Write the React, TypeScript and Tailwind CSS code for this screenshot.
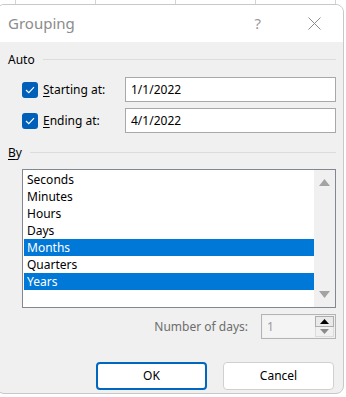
import { useState } from 'react';

const UNITS = ['Seconds', 'Minutes', 'Hours', 'Days', 'Months', 'Quarters', 'Years'];
const GRID_X = [15, 95, 175, 255, 335];

export default function App() {
  const [selected, setSelected] = useState<string[]>(['Months', 'Years']);

  const toggle = (u: string) =>
    setSelected((s) => (s.includes(u) ? s.filter((x) => x !== u) : [...s, u]));

  return (
    <div
      className="relative w-[346px] h-[397px] bg-white overflow-hidden text-[12px] text-black"
      style={{ fontFamily: '"Noto Sans", "Open Sans", sans-serif' }}
    >
      {/* Sheet grid behind the dialog */}
      <div className="relative h-[4px]">
        {GRID_X.map((x) => (
          <div key={x} className="absolute top-0 h-[4px] w-px bg-[#d4d4d4]" style={{ left: x }} />
        ))}
      </div>

      {/* Dialog */}
      <div className="ml-[-4px] w-[348px] h-[390px] flex flex-col rounded-lg border border-[#c8c8c8] bg-[#f0f0f0] overflow-hidden">
        {/* Title bar */}
        <div className="h-[37px] shrink-0 bg-white flex items-center pl-[11px] pr-[22px]">
          <span className="text-[15px] text-[#8c8c8c]">Grouping</span>
          <span className="ml-auto text-[15px] text-[#9a9a9a]">?</span>
          <svg className="ml-[47px]" width="13" height="13" viewBox="0 0 13 13">
            <path d="M0.5 0.5 L12.5 12.5 M12.5 0.5 L0.5 12.5" stroke="#8c8c8c" strokeWidth="1" />
          </svg>
        </div>

        <div className="flex flex-col pl-[11px] pr-[7px]">
          {/* Auto */}
          <div className="mt-[9px] h-[17px] flex items-center">
            <span>Auto</span>
            <div className="ml-[8px] flex-1 h-px bg-[#dcdcdc]" />
          </div>

          <div className="mt-[9px] flex flex-col gap-[6px]">
            <DateRow mnemonic="S" rest="tarting at:" value="1/1/2022" />
            <DateRow mnemonic="E" rest="nding at:" value="4/1/2022" />
          </div>

          {/* By */}
          <div className="mt-[11px] h-[17px] flex items-center">
            <span>
              <span className="underline underline-offset-2">B</span>y
            </span>
            <div className="ml-[8px] flex-1 h-px bg-[#dcdcdc]" />
          </div>

          {/* List */}
          <div className="mt-[8px] ml-[14px] w-[314px] h-[139px] border border-[#828790] bg-white flex">
            <div className="flex-1 pt-px pl-px">
              {UNITS.map((u) => {
                const on = selected.includes(u);
                return (
                  <div
                    key={u}
                    onClick={() => toggle(u)}
                    className={
                      'h-[17px] flex items-center pl-[3px] leading-none ' +
                      (on ? 'bg-[#0078d7] text-white' : 'text-black')
                    }
                  >
                    {u}
                  </div>
                );
              })}
            </div>
            <div className="w-[21px] bg-[#f0f0f0] flex flex-col items-center justify-between py-[9px]">
              <svg width="11" height="7" viewBox="0 0 11 7">
                <path d="M5.5 0 L11 7 L0 7 Z" fill="#a3a3a3" />
              </svg>
              <svg width="11" height="7" viewBox="0 0 11 7">
                <path d="M0 0 L11 0 L5.5 7 Z" fill="#a3a3a3" />
              </svg>
            </div>
          </div>

          {/* Number of days */}
          <div className="mt-[6px] h-[25px] flex items-center justify-end">
            <span className="text-[#6d6d6d]">Number of days:</span>
            <div className="ml-[13px] w-[75px] h-[25px] border border-[#b4b4b4] bg-[#f0f0f0] flex p-px">
              <div className="flex-1 bg-[#f4f4f4] pl-[4px] flex items-center text-[#9a9a9a]">1</div>
              <div className="w-[19px] flex flex-col">
                <div className="h-[11px] border border-[#adadad] bg-[#e9e9e9] flex items-center justify-center">
                  <svg width="9" height="5" viewBox="0 0 9 5">
                    <path d="M4.5 0 L9 5 L0 5 Z" fill="#000" />
                  </svg>
                </div>
                <div className="h-[10px] border border-[#dcdcdc] border-t-0 flex items-center justify-center">
                  <svg width="9" height="5" viewBox="0 0 9 5">
                    <path d="M0 0 L9 0 L4.5 5 Z" fill="#8a8a8a" />
                  </svg>
                </div>
              </div>
            </div>
          </div>

          {/* Buttons */}
          <div className="mt-[23px] pr-[2px] flex justify-end gap-[16px]">
            <button className="w-[111px] h-[28px] rounded-[4px] border-2 border-[#0067c0] bg-white">OK</button>
            <button className="w-[111px] h-[28px] rounded-[4px] border border-[#d0d0d0] bg-white">Cancel</button>
          </div>
        </div>
      </div>
    </div>
  );
}

function DateRow({ mnemonic, rest, value }: { mnemonic: string; rest: string; value: string }) {
  return (
    <div className="h-[25px] flex items-center">
      <div className="ml-[14px] w-[16px] h-[16px] rounded-[3px] bg-[#005fb8] flex items-center justify-center">
        <svg width="10" height="8" viewBox="0 0 10 8">
          <path d="M1 4 L3.8 6.6 L9 1.2" fill="none" stroke="white" strokeWidth="1.2" />
        </svg>
      </div>
      <span className="ml-[5px] w-[82px]">
        <span className="underline underline-offset-2">{mnemonic}</span>
        {rest}
      </span>
      <div className="w-[211px] h-[25px] border border-[#a8a8a8] bg-white flex items-center pl-[5px]">{value}</div>
    </div>
  );
}
